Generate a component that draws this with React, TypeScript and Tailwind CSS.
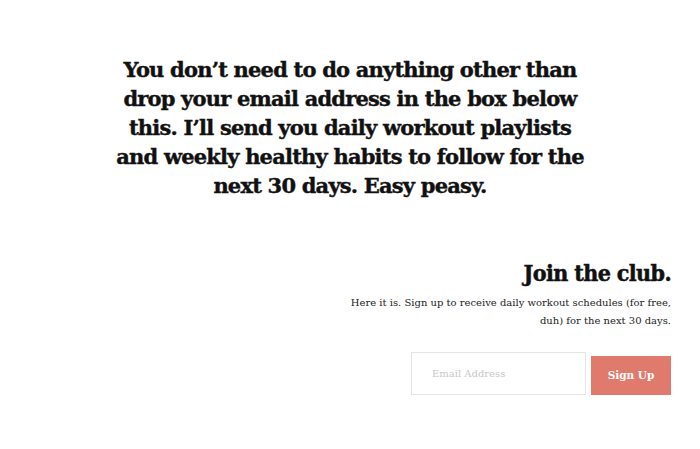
export default function App() {
  return (
    <div className="w-[700px] h-[449px] bg-white overflow-hidden flex flex-col" style={{ fontFamily: '"DejaVu Serif", serif' }}>
      <div className="pt-[55px] flex justify-center">
        <h1 className="text-center text-[21px] leading-[29px] font-bold text-[#111] tracking-[-0.8px] [-webkit-text-stroke:0.4px_#111]">
          You don’t need to do anything other than<br />
          drop your email address in the box below<br />
          this. I’ll send you daily workout playlists<br />
          and weekly healthy habits to follow for the<br />
          next 30 days. Easy peasy.
        </h1>
      </div>
      <div className="mt-[58px] flex flex-col items-end pr-[29px]">
        <h2 className="text-[23px] leading-[30px] font-bold text-[#111] tracking-[-0.6px] [font-stretch:condensed] [-webkit-text-stroke:0.5px_#111]" style={{ fontFamily: '"DejaVu Serif Condensed", "DejaVu Serif", serif' }}>Join the club.</h2>
        <p className="mt-[6px] w-[340px] text-right text-[10px] leading-[18px] text-[#222]">
          Here it is. Sign up to receive daily workout schedules (for free, duh) for the next 30 days.
        </p>
        <div className="mt-[22px] flex items-center gap-[5px]">
          <input
            placeholder="Email Address"
            className="w-[175px] h-[43px] border border-[#e5e5e5] px-[20px] text-[10px] text-[#333] placeholder:text-[#c8c8c8] outline-none"
            style={{ fontFamily: '"DejaVu Serif", serif' }}
          />
          <button className="w-[80px] h-[39px] mt-[4px] bg-[#e07a6d] text-white text-[10.5px] font-bold" style={{ fontFamily: '"DejaVu Serif", serif' }}>
            Sign Up
          </button>
        </div>
      </div>
    </div>
  );
}
